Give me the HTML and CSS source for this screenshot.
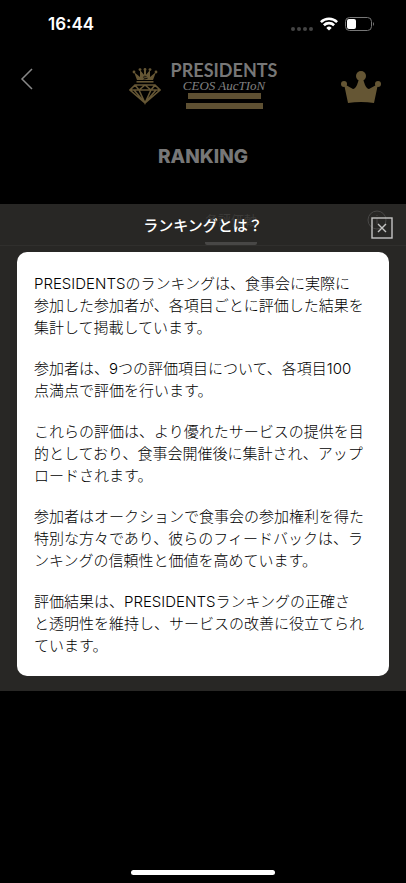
FILE: index.html
```html
<!DOCTYPE html>
<html lang="ja">
<head>
<meta charset="utf-8">
<meta name="viewport" content="width=device-width, initial-scale=1">
<title>RANKING</title>
<link rel="stylesheet" href="styles.css">
</head>
<body>
<div class="status">
  <span class="clock">16:44</span>
  <div class="indicators">
    <svg width="22" height="6" viewBox="0 0 22 6" fill="#444"><circle cx="2" cy="3" r="2"/><circle cx="8" cy="3" r="2"/><circle cx="14" cy="3" r="2"/><circle cx="20" cy="3" r="2"/></svg>
    <svg width="18" height="14" viewBox="0 0 18 14" fill="none" stroke="#fff" stroke-width="2.6"><path d="M.9 5.1a11.6 11.6 0 0 1 16.2 0M3.9 8.2a7.3 7.3 0 0 1 10.2 0"/><path d="M9 13.6 6.3 10.9a3.8 3.8 0 0 1 5.4 0Z" fill="#fff" stroke="none"/></svg>
    <svg width="30" height="14" viewBox="0 0 30 14"><rect x=".5" y=".5" width="26" height="13" rx="4" fill="none" stroke="#777"/><rect x="2" y="2" width="9" height="10" rx="2" fill="#fff"/><path d="M28 5q2 2 0 4Z" fill="#777"/></svg>
  </div>
</div>
<header class="header">
  <button class="back" aria-label="戻る"><svg width="14" height="22" viewBox="0 0 14 22" fill="none" stroke="#888" stroke-width="1.5"><path d="M12 1 2 11l10 10"/></svg></button>
  <div class="logo">
    <svg class="emblem" width="32" height="38" viewBox="0 0 32 38" fill="none" stroke="#655634">
      <path d="M8 12 5 4l6 5V2l5 6 5-6v7l6-5-3 8Z" fill="#655634" stroke="none"/>
      <path d="M7.500 13.800h17" stroke-width="1.600"/>
      <g fill="#655634" stroke="none"><circle cx="5" cy="4" r="1.400"/><circle cx="11" cy="1.600" r="1.400"/><circle cx="16" cy="1.400" r="1.400"/><circle cx="21" cy="1.600" r="1.400"/><circle cx="27" cy="4" r="1.400"/><path d="M15 1h2v8h-2Z"/></g>
      <path d="M17.500 8.500q-3-1-3 .6t3 1.200-3 1" stroke="#000" stroke-width=".7"/>
      <path d="M6 17h20l5 5-15 13L1 22ZM1 22h30M6 17l4 5 6-5 6 5 4-5M10 22l6 13 6-13M5 22l11 13M27 22 16 35" stroke-width="1.600"/>
    </svg>
    <div class="wordmark">
      <span class="brand">PRESIDENTS</span>
      <span class="script">CEOS AucTIoN</span>
      <i class="bar"></i>
      <i class="bar bar-wide"></i>
    </div>
  </div>
  <button class="rank" aria-label="ランキング"><svg width="42" height="34" viewBox="0 0 42 34" fill="#655634"><circle cx="21" cy="5" r="5"/><circle cx="4" cy="13" r="3"/><circle cx="38" cy="13" r="3"/><path d="m4 13 9 5q2 0 4-4l2-6h4l2 6q2 4 4 4l9-5-4 19q-13-2-26 0Z"/></svg></button>
</header>
<h1>RANKING</h1>
<main class="sheet">
  <div class="tabs" aria-hidden="true">
    <span class="tab">各評価軸</span>
    <svg class="info" width="20" height="20" viewBox="0 0 20 20" fill="none" stroke="#484746"><circle cx="10" cy="10" r="9"/><path d="M10 5v1M10 8v6"/></svg>
  </div>
  <section class="dialog" role="dialog" aria-labelledby="title">
    <div class="dialog-head">
      <h2 id="title">ランキングとは？</h2>
      <button class="close" aria-label="閉じる"><svg width="22" height="22" viewBox="0 0 22 22" fill="none" stroke="#c4c4c3" stroke-width="1.4"><rect x="1" y="1" width="20" height="20"/><path d="m7 7 8 8M15 7l-8 8"/></svg></button>
    </div>
    <div class="card">
      <p>PRESIDENTSのランキングは、食事会に実際に<br>参加した参加者が、各項目ごとに評価した結果を<br>集計して掲載しています。</p>
      <p>参加者は、9つの評価項目について、各項目100<br>点満点で評価を行います。</p>
      <p>これらの評価は、より優れたサービスの提供を目<br>的としており、食事会開催後に集計され、アップ<br>ロードされます。</p>
      <p>参加者はオークションで食事会の参加権利を得た<br>特別な方々であり、彼らのフィードバックは、ラ<br>ンキングの信頼性と価値を高めています。</p>
      <p>評価結果は、PRESIDENTSランキングの正確さ<br>と透明性を維持し、サービスの改善に役立てられ<br>ています。</p>
    </div>
  </section>
</main>
<div class="home"></div>
</body>
</html>
```
FILE: styles.css
```css
* { box-sizing: border-box; }
body {
  margin: 0;
  min-height: 100vh;
  display: flex;
  flex-direction: column;
  background: #000;
  color: #fff;
  font-family: Inter, "Noto Sans CJK JP", sans-serif;
}
button { border: 0; padding: 0; background: none; display: flex; cursor: pointer; }
svg { display: block; }
.status {
  height: 48px;
  padding: 0 31px 0 48px;
  display: flex;
  align-items: center;
  justify-content: space-between;
}
.clock { font-size: 17px; line-height: 20px; font-weight: 600; }
.indicators { display: flex; align-items: center; gap: 7px; }
.indicators svg:first-child { margin-top: 10px; }
.header {
  height: 72px;
  padding: 14px 24px 0 20px;
  display: grid;
  grid-template-columns: 42px 1fr 42px;
}
.back { margin-top: 6px; align-self: start; }
.rank { margin-top: 9px; align-self: start; }
.logo { display: flex; justify-content: center; gap: 10px; padding-left: 4px; }
.emblem { margin-top: 6px; }
.wordmark { display: flex; flex-direction: column; align-items: center; }
.brand { font: 700 18px/17px Lato, sans-serif; color: #777; }
.script { font: italic 13px/14px "Liberation Serif", serif; color: #808080; white-space: nowrap; }
.bar { width: 73px; height: 6px; background: #5e5032; }
.bar-wide { width: 77px; margin-top: 4px; }
h1 {
  margin: 24px 0 35px;
  font-size: 19px;
  line-height: 25px;
  font-weight: 800;
  text-align: center;
  color: #777;
}
.sheet { position: relative; background: #282725; padding: 0 17px 15px; }
.tabs {
  position: absolute;
  inset: 0 0 auto;
  height: 42px;
  border-bottom: 1px solid #302f2d;
  display: flex;
  justify-content: center;
}
.tab {
  width: 52px;
  margin-left: 56px;
  padding-top: 6px;
  border-bottom: 3px solid #484746;
  border-radius: 2px;
  font-size: 13px;
  line-height: 20px;
  text-align: center;
  color: #3c3b39;
  white-space: nowrap;
}
.info { position: absolute; top: 6px; right: 19px; }
.dialog { position: relative; }
.dialog-head { position: relative; height: 48px; }
h2 {
  margin: 0;
  padding-top: 10px;
  font-size: 15px;
  line-height: 24px;
  font-weight: 500;
  text-align: center;
}
.close { position: absolute; top: 13px; right: -4px; }
.card {
  padding: 21px 17px 19px;
  border-radius: 10px;
  background: #fff;
  color: #000;
  font-size: 15px;
  line-height: 22px;
  font-weight: 300;
}
.card p { margin: 0 0 19px; }
.card p:last-child { margin-bottom: 0; }
.home {
  width: 144px;
  height: 5px;
  margin: auto auto 8px;
  border-radius: 3px;
  background: #fff;
}
```
